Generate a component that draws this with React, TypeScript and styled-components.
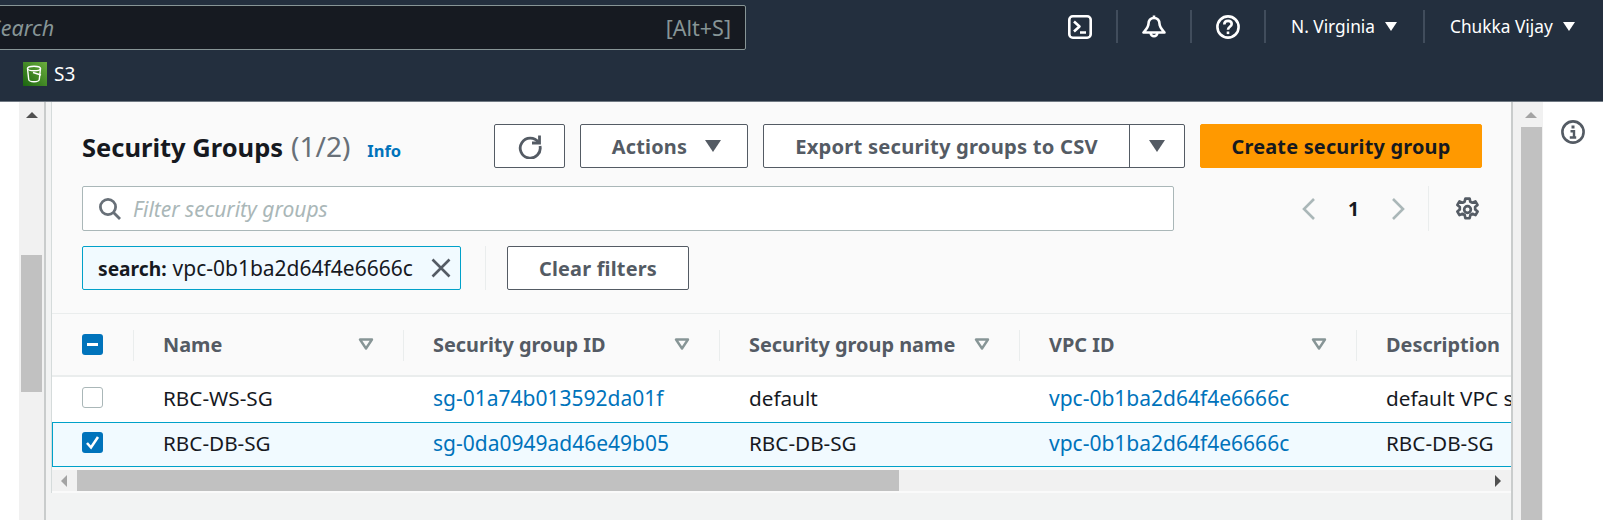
import React from "react";
import styled, { createGlobalStyle } from "styled-components";

const Global = createGlobalStyle`
  html, body { margin: 0; padding: 0; background: #fff; overflow: hidden; }
  body { font-family: "Noto Sans", "Liberation Sans", sans-serif; }
`;

const Page = styled.div`
  width: 1603px;
  height: 520px;
  display: flex;
  flex-direction: column;
  overflow: hidden;
`;
const TopNav = styled.header`
  height: 101px;
  background: #232f3e;
  border-bottom: 1px solid #6f7882;
  flex: none;
  display: flex;
  flex-direction: column;
`;
const NavRow = styled.div`
  height: 55px;
  padding-top: 5px;
  box-sizing: border-box;
  display: flex;
  align-items: flex-start;
`;
const SearchBox = styled.div`
  width: 757px;
  height: 45px;
  margin-left: -11px;
  box-sizing: border-box;
  background: #161a21;
  border: 1px solid #879596;
  border-radius: 2px;
  display: flex;
  align-items: center;
  justify-content: space-between;
  padding: 0 14px 0 0;
  color: #879596;
  font-size: 21.5px;
  flex: none;
`;
const SearchHint = styled.span`
  font-style: italic;
`;
const NavTools = styled.div`
  margin-left: 322px;
  height: 33px;
  margin-top: 5px;
  display: flex;
  align-items: center;
`;
const ToolIcon = styled.span`
  width: 24px;
  height: 24px;
  display: flex;
  margin: 0 24px;
  &:first-child { margin-left: 0; }
`;
const NavDivider = styled.span`
  width: 2px;
  height: 33px;
  background: #414d5c;
  flex: none;
`;
const NavMenu = styled.span<{ $w: number }>`
  width: ${(p) => p.$w}px;
  box-sizing: border-box;
  display: flex;
  align-items: center;
  color: #fff;
  font-size: 17.3px;
  padding-left: 25px;
  gap: 10px;
  white-space: nowrap;
`;
const NavCaret = styled.span`
  width: 0;
  height: 0;
  border-left: 6px solid transparent;
  border-right: 6px solid transparent;
  border-top: 9px solid #fff;
`;
const ServiceRow = styled.div`
  display: flex;
  align-items: center;
  gap: 7px;
  height: 24px;
  margin-top: 7px;
  padding-left: 23px;
  color: #fff;
  font-size: 19px;
`;
const Body = styled.div`
  flex: 1;
  min-height: 0;
  display: flex;
`;
const VScroll = styled.div<{ $left: number; $thumbTop: number; $thumbH: number; $inset: number; $w: number }>`
  position: relative;
  flex: none;
  width: ${(p) => p.$w}px;
  margin-left: ${(p) => p.$left}px;
  background: #f1f1f1;
  &::before {
    content: "";
    position: absolute;
    left: ${(p) => p.$inset}px;
    top: ${(p) => p.$thumbTop}px;
    width: 21px;
    height: ${(p) => p.$thumbH}px;
    background: #c1c1c1;
  }
`;
const UpArrow = styled.span<{ $x: number; $c: string }>`
  position: absolute;
  left: ${(p) => p.$x}px;
  top: 10px;
  width: 0;
  height: 0;
  border-left: 6px solid transparent;
  border-right: 6px solid transparent;
  border-bottom: 6px solid ${(p) => p.$c};
`;
const Content = styled.main`
  width: 1469px;
  flex: none;
  box-sizing: border-box;
  border-left: 2px solid #c9cccc;
  border-right: 2px solid #c9cccc;
  background: #f2f3f3;
  display: flex;
  flex-direction: column;
`;
const Panel = styled.section`
  margin-left: 5px;
  background: #fafafa;
  height: 391px;
  border-left: 1px solid #d5dbdb;
  display: flex;
  flex-direction: column;
  overflow: hidden;
`;
const PanelHead = styled.div`
  padding: 22px 30px 0 30px;
  height: 212px;
  box-sizing: border-box;
  border-bottom: 1px solid #eaeded;
  display: flex;
  flex-direction: column;
  gap: 17px;
`;
const ActionRow = styled.div`
  display: flex;
  align-items: center;
  height: 44px;
`;
const Title = styled.h1`
  margin: 0;
  width: 412px;
  flex: none;
  font-size: 25.5px;
  font-weight: 700;
  color: #16191f;
  white-space: nowrap;
  display: flex;
  align-items: baseline;
`;
const Count = styled.span`
  font-weight: 400;
  font-size: 28px;
  color: #687078;
  margin-left: 8px;
`;
const InfoLink = styled.a`
  font-size: 16.5px;
  font-weight: 700;
  color: #0073bb;
  margin-left: 17px;
`;
const Btn = styled.button<{ $w: number; $ml?: number; $primary?: boolean; $shift?: number }>`
  width: ${(p) => p.$w}px;
  margin-left: ${(p) => p.$ml ?? 0}px;
  height: 44px;
  flex: none;
  box-sizing: border-box;
  padding: 0 0 0 ${(p) => p.$shift ?? 0}px;
  font-family: inherit;
  font-size: 19.9px;
  font-weight: 700;
  letter-spacing: 0.2px;
  border-radius: 2px;
  border: 1px solid ${(p) => (p.$primary ? "#ff9900" : "#545b64")};
  background: ${(p) => (p.$primary ? "#ff9900" : "#fff")};
  color: ${(p) => (p.$primary ? "#16191f" : "#545b64")};
  display: flex;
  align-items: center;
  justify-content: center;
  gap: 18px;
`;
const SplitBtn = styled.div`
  margin-left: 15px;
  width: 422px;
  height: 44px;
  box-sizing: border-box;
  border: 1px solid #545b64;
  border-radius: 2px;
  background: #fff;
  display: flex;
  flex: none;
  color: #545b64;
  font-size: 20.2px;
  font-weight: 700;
  letter-spacing: 0.2px;
`;
const SplitLabel = styled.span`
  width: 365px;
  display: flex;
  align-items: center;
  justify-content: center;
  border-right: 1px solid #545b64;
  white-space: nowrap;
`;
const SplitCaret = styled.span`
  flex: 1;
  display: flex;
  align-items: center;
  justify-content: center;
`;
const Caret = styled.span`
  width: 0;
  height: 0;
  border-left: 8px solid transparent;
  border-right: 8px solid transparent;
  border-top: 12px solid #545b64;
`;
const FilterRow = styled.div`
  display: flex;
  height: 45px;
  margin-top: 1px;
`;
const FilterInput = styled.div`
  width: 1092px;
  box-sizing: border-box;
  flex: none;
  border: 1px solid #aab7b8;
  border-radius: 2px;
  background: #fff;
  display: flex;
  align-items: center;
  padding-left: 15px;
  gap: 11px;
  color: #aab7b8;
  font-size: 21px;
  font-style: italic;
`;
const Pager = styled.div`
  display: flex;
  align-items: center;
  margin-left: 127px;
  width: 127px;
  color: #16191f;
  font-size: 19.5px;
  font-weight: 700;
`;
const PagerNum = styled.span`
  width: 75px;
  text-align: center;
`;
const PagerSep = styled.span`
  width: 1px;
  height: 45px;
  background: #eaeded;
  flex: none;
`;
const GearSlot = styled.span`
  margin-left: 26px;
  padding-top: 1px;
  display: flex;
  align-items: center;
`;
const TokenRow = styled.div`
  display: flex;
  align-items: center;
  height: 44px;
  margin-top: -2px;
`;
const Token = styled.div`
  width: 379px;
  height: 44px;
  box-sizing: border-box;
  flex: none;
  background: #f1faff;
  border: 1px solid #00a1c9;
  border-radius: 2px;
  display: flex;
  align-items: center;
  padding-left: 15px;
  color: #16191f;
  font-size: 21px;
  white-space: nowrap;
`;
const TokenKey = styled.b`
  font-weight: 700;
  font-size: 19.2px;
  margin-right: 6px;
`;
const TokenClose = styled.span`
  margin-left: auto;
  margin-right: 9px;
  display: flex;
`;
const TokenSep = styled.span`
  width: 1px;
  height: 44px;
  background: #eaeded;
  margin: 0 21px 0 24px;
  flex: none;
`;
const Grid = styled.div`
  display: grid;
  grid-template-columns: 81px 270px 316px 300px 337px 156px;
  flex: none;
`;
const HeadCell = styled.div<{ $sep?: boolean }>`
  height: 63px;
  box-sizing: border-box;
  border-bottom: 2px solid #eaeded;
  display: flex;
  align-items: center;
  padding: 0 29px 1px 30px;
  justify-content: space-between;
  color: #545b64;
  font-size: 19.9px;
  font-weight: 700;
  white-space: nowrap;
  position: relative;
  &::before {
    content: "";
    display: ${(p) => (p.$sep ? "block" : "none")};
    position: absolute;
    left: 0;
    top: 16px;
    width: 1px;
    height: 31px;
    background: #eaeded;
  }
`;
const BodyCell = styled.div<{ $selected?: boolean; $first?: boolean }>`
  height: 45px;
  box-sizing: border-box;
  background: ${(p) => (p.$selected ? "#f1faff" : "#fff")};
  border-top: ${(p) => (p.$selected ? "1px solid #00a1c9" : "0")};
  border-bottom: ${(p) => (p.$selected ? "1px solid #00a1c9" : "0")};
  border-left: ${(p) => (p.$selected && p.$first ? "1px solid #00a1c9" : "0")};
  display: flex;
  align-items: center;
  padding-left: ${(p) => (p.$first ? (p.$selected ? 29 : 30) : 30)}px;
  padding-bottom: 4px;
  font-size: 20.7px;
  color: #16191f;
  white-space: nowrap;
  overflow: hidden;
  a { color: #0073bb; font-size: 21px; }
`;
const Check = styled.span<{ $on?: boolean }>`
  width: 21px;
  height: 21px;
  box-sizing: border-box;
  border-radius: 3px;
  background: ${(p) => (p.$on ? "#0073bb" : "#fff")};
  border: ${(p) => (p.$on ? "0" : "1px solid #aab7b8")};
  display: flex;
  align-items: center;
  justify-content: center;
`;
const HScroll = styled.div`
  margin-top: 3px;
  height: 21px;
  background: #f1f1f1;
  display: flex;
  align-items: center;
  flex: none;
`;
const HLeft = styled.span`
  width: 0;
  height: 0;
  margin-left: 9px;
  border-top: 6px solid transparent;
  border-bottom: 6px solid transparent;
  border-right: 6px solid #a3a3a3;
`;
const HThumb = styled.span`
  margin-left: 10px;
  width: 822px;
  height: 21px;
  background: #c1c1c1;
`;
const HRight = styled.span`
  width: 0;
  height: 0;
  margin-left: auto;
  margin-right: 10px;
  border-top: 6px solid transparent;
  border-bottom: 6px solid transparent;
  border-left: 6px solid #505050;
`;
const Rail = styled.aside`
  flex: 1;
  display: flex;
  justify-content: center;
  padding-top: 18px;
  box-sizing: border-box;
`;

const Sort = () => (
  <svg width="16" height="12" viewBox="0 0 16 12">
    <path d="M2 1.5h12L8 10.5z" fill="none" stroke="#879596" strokeWidth="2.4" strokeLinejoin="round" />
  </svg>
);

const columns = ["Name", "Security group ID", "Security group name", "VPC ID", "Description"];
const rows = [
  { n: "RBC-WS-SG", id: "sg-01a74b013592da01f", g: "default", d: "default VPC security group", on: false },
  { n: "RBC-DB-SG", id: "sg-0da0949ad46e49b05", g: "RBC-DB-SG", d: "RBC-DB-SG", on: true },
];
const VPC = "vpc-0b1ba2d64f4e6666c";

export default function App() {
  return (
    <Page>
      <Global />
      <TopNav>
        <NavRow>
          <SearchBox>
            <SearchHint>Search</SearchHint>
            <span>[Alt+S]</span>
          </SearchBox>
          <NavTools>
            <ToolIcon>
              <svg width="24" height="24" viewBox="0 0 24 24" fill="none" stroke="#fff" strokeWidth="2.6">
                <rect x="1.3" y="1.3" width="21.4" height="21.4" rx="3.5" />
                <path d="M6 6.5l5.5 5-5.5 5M12 17.5h6" strokeLinejoin="round" />
              </svg>
            </ToolIcon>
            <NavDivider />
            <ToolIcon>
              <svg width="24" height="24" viewBox="0 0 24 24" fill="none" stroke="#fff" strokeWidth="2.6">
                <path d="M12 0.5v2.5M12 3c-3.6 0-5.5 2.5-5.5 5.8 0 3.2-2.2 5.4-5 8.7h21c-2.8-3.3-5-5.5-5-8.7C17.5 5.5 15.6 3 12 3z" strokeLinejoin="round" />
                <path d="M8.7 18a3.3 3.3 0 0 0 6.6 0" />
              </svg>
            </ToolIcon>
            <NavDivider />
            <ToolIcon>
              <svg width="24" height="24" viewBox="0 0 24 24" fill="none" stroke="#fff" strokeWidth="2.6">
                <circle cx="12" cy="12" r="10.6" />
                <path d="M8.3 9.5c0-2.3 1.7-3.6 3.8-3.6s3.6 1.3 3.6 3.2c0 2.7-3.7 2.8-3.7 5.6" />
                <path d="M12 16.5v2.6" />
              </svg>
            </ToolIcon>
            <NavDivider />
            <NavMenu $w={157}>
              N. Virginia<NavCaret />
            </NavMenu>
            <NavDivider />
            <NavMenu $w={150}>
              Chukka Vijay<NavCaret />
            </NavMenu>
          </NavTools>
        </NavRow>
        <ServiceRow>
          <svg width="24" height="24" viewBox="0 0 24 24">
            <defs>
              <linearGradient id="s3g" x1="0" y1="1" x2="1" y2="0">
                <stop offset="0" stopColor="#1b660f" />
                <stop offset="1" stopColor="#6cae3e" />
              </linearGradient>
            </defs>
            <rect width="24" height="24" fill="url(#s3g)" />
            <g fill="none" stroke="#fff" strokeWidth="1.4">
              <ellipse cx="11" cy="6.5" rx="6.5" ry="2.3" />
              <path d="M4.5 6.5l1.2 11c.2 1.4 2.4 2.2 5.3 2.2s5.1-.8 5.3-2.2l1.2-11" />
              <path d="M10 10.5l8 2.5" />
            </g>
          </svg>
          S3
        </ServiceRow>
      </TopNav>
      <Body>
        <VScroll $left={19} $w={25} $inset={2} $thumbTop={153} $thumbH={137}>
          <UpArrow $x={7} $c="#505050" />
        </VScroll>
        <Content>
          <Panel>
            <PanelHead>
              <ActionRow>
                <Title>
                  Security Groups<Count>(1/2)</Count>
                  <InfoLink>Info</InfoLink>
                </Title>
                <Btn $w={71} aria-label="Refresh">
                  <svg width="26" height="26" viewBox="0 0 26 26" fill="none" stroke="#545b64" strokeWidth="2.8">
                    <path d="M21.5 9.5A10 10 0 1 0 23 13" />
                    <path d="M22.5 2.5v7.5h-7.5" strokeLinejoin="miter" />
                  </svg>
                </Btn>
                <Btn $w={168} $ml={15} $shift={5}>
                  Actions
                  <Caret />
                </Btn>
                <SplitBtn>
                  <SplitLabel>Export security groups to CSV</SplitLabel>
                  <SplitCaret>
                    <Caret />
                  </SplitCaret>
                </SplitBtn>
                <Btn $w={282} $ml={15} $primary>
                  Create security group
                </Btn>
              </ActionRow>
              <FilterRow>
                <FilterInput>
                  <svg width="24" height="24" viewBox="0 0 24 24" fill="none" stroke="#687078" strokeWidth="2.8">
                    <circle cx="10" cy="10" r="7.6" />
                    <path d="M15.5 15.5l6.5 6.5" />
                  </svg>
                  Filter security groups
                </FilterInput>
                <Pager>
                  <svg width="15" height="24" viewBox="0 0 15 24" fill="none" stroke="#aab7b8" strokeWidth="2.6">
                    <path d="M13 2L3 12l10 10" />
                  </svg>
                  <PagerNum>1</PagerNum>
                  <svg width="15" height="24" viewBox="0 0 15 24" fill="none" stroke="#aab7b8" strokeWidth="2.6">
                    <path d="M2 2l10 10L2 22" />
                  </svg>
                </Pager>
                <PagerSep />
                <GearSlot>
                  <svg width="25" height="25" viewBox="0 0 24 24" fill="none" stroke="#545b64" strokeWidth="2.6" strokeLinejoin="round">
                    <circle cx="12" cy="12" r="3.2" />
                    <path d="M10 1.5h4l.7 3 2.1 1 2.8-1.3 2 3.4-2.3 2 .1 2.4 2.3 2-2 3.4-2.9-1.3-2 1.2-.8 3.1h-4l-.7-3.1-2.1-1.2-2.9 1.3-2-3.4 2.3-2v-2.4l-2.3-2 2-3.4 2.9 1.3 2-1z" />
                  </svg>
                </GearSlot>
              </FilterRow>
              <TokenRow>
                <Token>
                  <TokenKey>search:</TokenKey>
                  {VPC}
                  <TokenClose>
                    <svg width="20" height="20" viewBox="0 0 20 20" stroke="#545b64" strokeWidth="2.6">
                      <path d="M1.5 1.5l17 17M18.5 1.5l-17 17" />
                    </svg>
                  </TokenClose>
                </Token>
                <TokenSep />
                <Btn $w={182}>Clear filters</Btn>
              </TokenRow>
            </PanelHead>
            <Grid>
              <HeadCell>
                <Check $on>
                  <svg width="11" height="3" viewBox="0 0 11 3">
                    <rect width="11" height="3" fill="#fff" />
                  </svg>
                </Check>
              </HeadCell>
              {columns.map((c, i) => (
                <HeadCell key={c} $sep>
                  {c}
                  {i < 4 && <Sort />}
                </HeadCell>
              ))}
              {rows.map((r) => (
                <React.Fragment key={r.n}>
                  <BodyCell $selected={r.on} $first>
                    <Check $on={r.on}>
                      {r.on && (
                        <svg width="15" height="15" viewBox="0 0 15 15" fill="none" stroke="#fff" strokeWidth="2.6">
                          <path d="M2 8l4 4.5L13 2" />
                        </svg>
                      )}
                    </Check>
                  </BodyCell>
                  <BodyCell $selected={r.on}>{r.n}</BodyCell>
                  <BodyCell $selected={r.on}>
                    <a>{r.id}</a>
                  </BodyCell>
                  <BodyCell $selected={r.on}>{r.g}</BodyCell>
                  <BodyCell $selected={r.on}>
                    <a>{VPC}</a>
                  </BodyCell>
                  <BodyCell $selected={r.on}>{r.d}</BodyCell>
                </React.Fragment>
              ))}
            </Grid>
            <HScroll>
              <HLeft />
              <HThumb />
              <HRight />
            </HScroll>
          </Panel>
        </Content>
        <VScroll $left={0} $w={30} $inset={8} $thumbTop={25} $thumbH={400}>
          <UpArrow $x={12} $c="#a3a3a3" />
        </VScroll>
        <Rail>
          <svg width="24" height="24" viewBox="0 0 24 24" fill="none" stroke="#545b64" strokeWidth="2.6">
            <circle cx="12" cy="12" r="10.6" />
            <path d="M12 5.5v3" strokeWidth="3" />
            <path d="M9.5 11.2H13v6M8.8 17.5h6.4" strokeWidth="2.4" />
          </svg>
        </Rail>
      </Body>
    </Page>
  );
}
